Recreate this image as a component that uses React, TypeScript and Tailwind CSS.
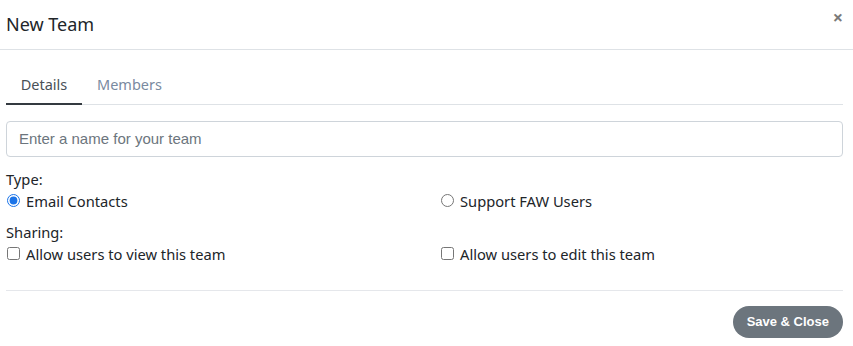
export default function App() {
  return (
    <div className="w-[853px] h-[346px] bg-white text-[#212529]" style={{ fontFamily: '"Noto Sans", "Open Sans", sans-serif' }}>
      <div className="flex h-[50px] items-center justify-between border-b border-[#dee2e6] pl-[6px] pr-[10px]">
        <h1 className="text-[18px] leading-none pb-[1px]">New Team</h1>
        <button className="mb-[16px] text-[18px] leading-none font-bold text-[#7a7a7a]">×</button>
      </div>

      <div className="px-[6px] pr-[10px]">
        <div className="mt-[24px] flex border-b border-[#dee2e6] text-[14.5px]">
          <div className="-mb-px w-[76px] border-b-2 border-[#343a40] pb-[7px] text-center text-[#495057]">Details</div>
          <div className="pb-[7px] pl-[15px] text-[#7a8aa0]">Members</div>
        </div>

        <input
          className="mt-[16px] block h-[36px] w-full rounded-[4px] border border-[#ced4da] px-[12px] text-[15px] placeholder-[#6c757d] outline-none"
          style={{ fontFamily: '"Liberation Sans", Arial, sans-serif' }}
          placeholder="Enter a name for your team"
        />

        <div className="mt-[11px] text-[14.7px] leading-[22px]">
          <div>Type:</div>
          <div className="grid grid-cols-[434px_1fr]">
            <label className="flex items-center gap-[6px]">
              <input type="radio" name="type" defaultChecked className="m-0 ml-[1px] h-[13px] w-[13px] accent-[#1a73e8]" />
              <span>Email Contacts</span>
            </label>
            <label className="flex items-center gap-[6px]">
              <input type="radio" name="type" className="m-0 ml-[1px] h-[13px] w-[13px]" />
              <span>Support FAW Users</span>
            </label>
          </div>
          <div className="mt-[9px]">Sharing:</div>
          <div className="grid grid-cols-[434px_1fr]">
            <label className="flex items-center gap-[6px]">
              <input type="checkbox" className="m-0 ml-[1px] h-[13px] w-[13px]" />
              <span>Allow users to view this team</span>
            </label>
            <label className="flex items-center gap-[6px]">
              <input type="checkbox" className="m-0 ml-[1px] h-[13px] w-[13px]" />
              <span>Allow users to edit this team</span>
            </label>
          </div>
        </div>

        <div className="mt-[25px] border-t border-[#e5e7eb]" />
        <div className="mt-[15px] flex justify-end">
          <button
            className="h-[32px] rounded-full bg-[#6c757d] px-[14px] text-[13px] font-bold text-white"
            style={{ fontFamily: '"Liberation Sans", Arial, sans-serif' }}
          >
            Save &amp; Close
          </button>
        </div>
      </div>
    </div>
  );
}
